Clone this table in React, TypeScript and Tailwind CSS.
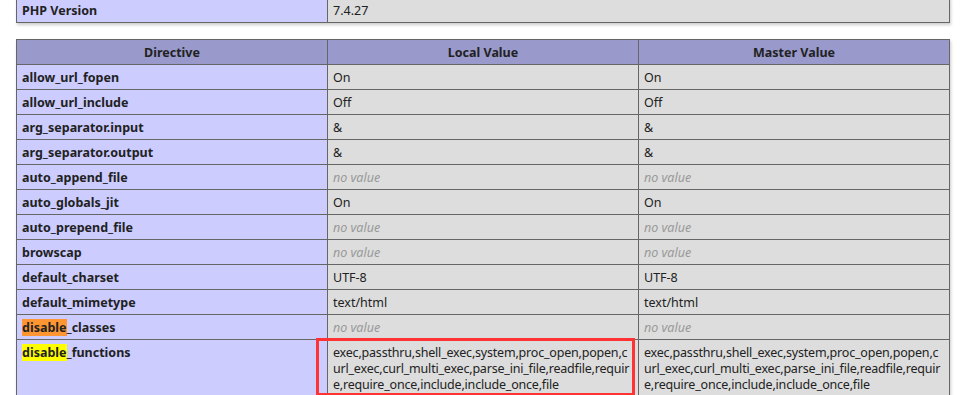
import React from 'react';

type Row = { name: string; local: string | null; master: string | null; hl?: 'orange' | 'yellow' };

const rows: Row[] = [
  { name: 'allow_url_fopen', local: 'On', master: 'On' },
  { name: 'allow_url_include', local: 'Off', master: 'Off' },
  { name: 'arg_separator.input', local: '&', master: '&' },
  { name: 'arg_separator.output', local: '&', master: '&' },
  { name: 'auto_append_file', local: null, master: null },
  { name: 'auto_globals_jit', local: 'On', master: 'On' },
  { name: 'auto_prepend_file', local: null, master: null },
  { name: 'browscap', local: null, master: null },
  { name: 'default_charset', local: 'UTF-8', master: 'UTF-8' },
  { name: 'default_mimetype', local: 'text/html', master: 'text/html' },
  { name: 'disable_classes', local: null, master: null, hl: 'orange' },
];

const funcLines = [
  'exec,passthru,shell_exec,system,proc_open,popen,c',
  'url_exec,curl_multi_exec,parse_ini_file,readfile,requir',
  'e,require_once,include,include_once,file',
];

const td = 'border border-[#666] px-[5px] pt-[5px] pb-[3px] align-baseline leading-[16px]';
const e = `${td} bg-[#ccf] font-bold w-[311px]`;
const v = `${td} bg-[#ddd] w-[311px]`;

function Value({ text }: { text: string | null }) {
  if (text === null) return <i className="text-[#999]">no value</i>;
  return <>{text}</>;
}

function Name({ name, hl }: { name: string; hl?: 'orange' | 'yellow' }) {
  if (!hl) return <>{name}</>;
  return (
    <>
      <mark className={hl === 'orange' ? 'bg-[#ff9632] text-[#222]' : 'bg-[#ffff00] text-[#222]'}>disable</mark>
      {name.slice(7)}
    </>
  );
}

export default function App() {
  return (
    <div className="bg-white min-h-screen text-[#222] text-[12.5px]" style={{ fontFamily: '"Noto Sans", "Open Sans", sans-serif' }}>
      <div className="pl-[16px] -mt-[3px]">
        <table className="border-collapse w-[934px] shadow-[1px_2px_3px_#ccc]">
          <tbody>
            <tr>
              <td className={e}>PHP Version</td>
              <td className={`${td} bg-[#ddd]`}>7.4.27</td>
            </tr>
          </tbody>
        </table>

        <table className="border-collapse w-[934px] mt-[16px] shadow-[1px_2px_3px_#ccc] table-fixed">
          <thead>
            <tr className="bg-[#99c] font-bold">
              <th className={`${td} text-center`}>Directive</th>
              <th className={`${td} text-center`}>Local Value</th>
              <th className={`${td} text-center`}>Master Value</th>
            </tr>
          </thead>
          <tbody>
            {rows.map((r) => (
              <tr key={r.name}>
                <td className={e}>
                  <Name name={r.name} hl={r.hl} />
                </td>
                <td className={v}>
                  <Value text={r.local} />
                </td>
                <td className={v}>
                  <Value text={r.master} />
                </td>
              </tr>
            ))}
            <tr>
              <td className={e}>
                <Name name="disable_functions" hl="yellow" />
              </td>
              <td className={`${v} relative`}>
                {funcLines.map((l) => (
                  <div key={l} className="whitespace-nowrap tracking-[-0.2px]">{l}</div>
                ))}
                {/* 截图里的红色标注框 */}
                <div className="absolute left-[-12px] right-[3px] top-[-2px] bottom-[0px] border-[3px] border-[#f33] pointer-events-none" />
              </td>
              <td className={v}>
                {funcLines.map((l) => (
                  <div key={l} className="whitespace-nowrap tracking-[-0.2px]">{l}</div>
                ))}
              </td>
            </tr>
          </tbody>
        </table>
      </div>
    </div>
  );
}
